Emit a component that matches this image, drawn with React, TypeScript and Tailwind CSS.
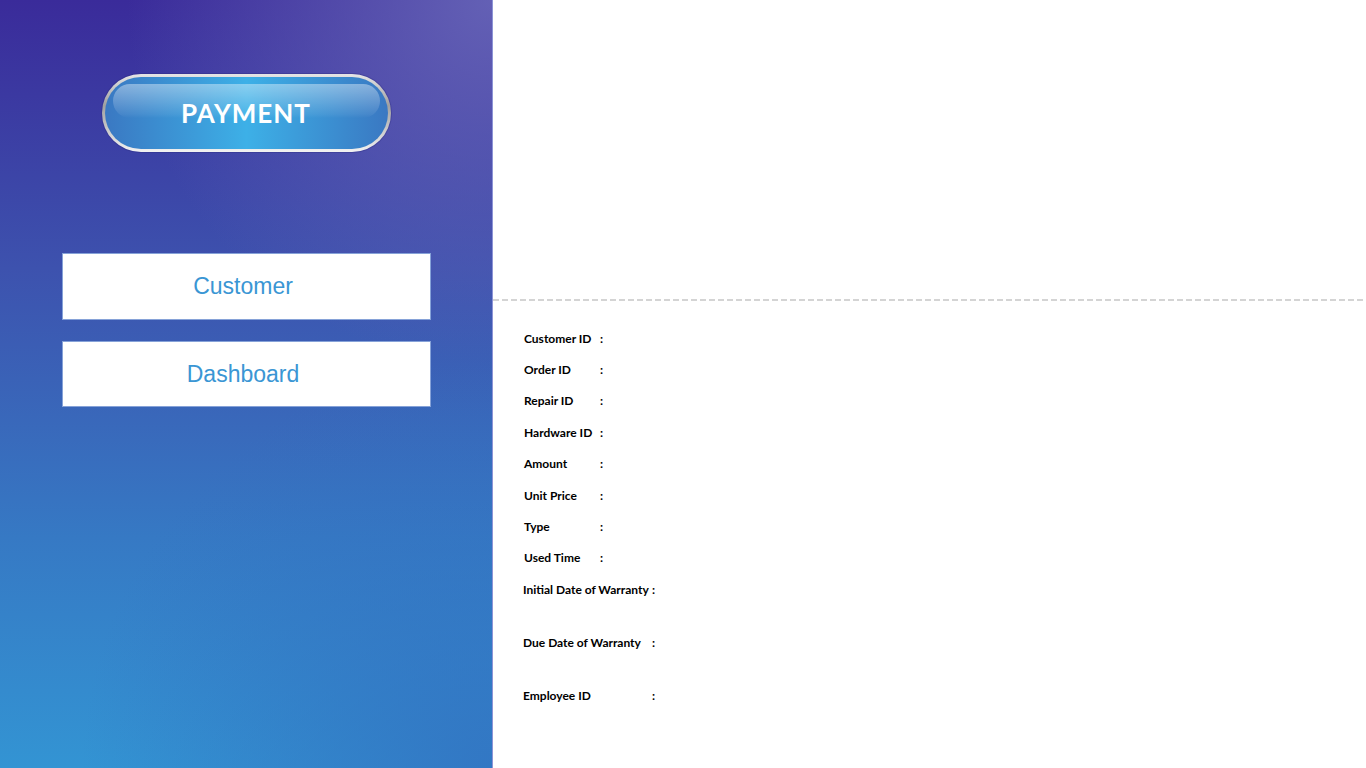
// App.tsx - Payment detail screen

const fields: { label: string; wide?: boolean; gap?: boolean }[] = [
  { label: 'Customer ID' },
  { label: 'Order ID' },
  { label: 'Repair ID' },
  { label: 'Hardware ID' },
  { label: 'Amount' },
  { label: 'Unit Price' },
  { label: 'Type' },
  { label: 'Used Time' },
  { label: 'Initial Date of Warranty', wide: true },
  { label: 'Due Date of Warranty', wide: true, gap: true },
  { label: 'Employee ID', wide: true, gap: true },
]

function PaymentPill() {
  return (
    <div className="mt-[74px] h-[78px] w-[289px] rounded-full bg-[linear-gradient(to_bottom,#e6e6e6,#a0a0a0_40%,#cfcfcf_75%,#f2f2f2)] p-[3px] shadow-[0_0_0_1px_rgba(40,40,120,0.3)]">
      <div className="relative flex h-full w-full items-center justify-center overflow-hidden rounded-full bg-[linear-gradient(to_right,#3a78c2,#3db0e7_50%,#3a78c2)]">
        <div className="absolute left-[8px] right-[8px] top-[7px] h-[34px] rounded-full bg-[linear-gradient(to_bottom,rgba(255,255,255,0.4),rgba(255,255,255,0.06)_90%,rgba(255,255,255,0))]" />
        <span className="relative font-['Lato',sans-serif] text-[26px] font-bold tracking-[1px] text-white">
          PAYMENT
        </span>
      </div>
    </div>
  )
}

function NavBox({ label, className }: { label: string; className?: string }) {
  return (
    <div
      className={`flex w-[369px] items-center justify-center border border-[#86a2d8] bg-white pr-[6px] font-['Liberation_Sans',Arial,sans-serif] text-[23px] text-[#3a96d4] ${className ?? ''}`}
    >
      {label}
    </div>
  )
}

export default function App() {
  return (
    <div className="flex h-[768px] w-full overflow-hidden bg-white">
      <aside className="flex h-full w-[493px] shrink-0 flex-col items-center border-r border-[#8d94d6] bg-[radial-gradient(circle_at_100%_0%,rgba(104,102,184,0.9),rgba(104,102,184,0)_40%),radial-gradient(circle_at_100%_100%,rgba(50,112,192,0.8),rgba(50,112,192,0)_45%),linear-gradient(to_bottom,#3a2b9a,#3d52ae_35%,#3679c4_70%,#3394d3)]">
        <PaymentPill />
        <NavBox label="Customer" className="mt-[101px] h-[67px]" />
        <NavBox label="Dashboard" className="mt-[21px] h-[66px]" />
      </aside>

      <main className="flex flex-1 flex-col">
        <div className="h-[299px]" />
        <div className="h-[2px] w-full bg-[repeating-linear-gradient(to_right,#d4d4d4_0_6px,transparent_6px_9px)]" />
        <div className="flex flex-col pl-[31px] pt-[22px] font-['Lato',sans-serif] text-[12px] font-bold text-black">
          {fields.map((f) => (
            <div
              key={f.label}
              className={`flex h-[31.4px] items-center whitespace-nowrap ${f.gap ? 'mt-[21.6px]' : ''} ${f.wide ? '-ml-px' : ''}`}
            >
              <span className={f.wide ? 'w-[129px]' : 'w-[76px]'}>{f.label}</span>
              <span>:</span>
            </div>
          ))}
        </div>
      </main>
    </div>
  )
}
